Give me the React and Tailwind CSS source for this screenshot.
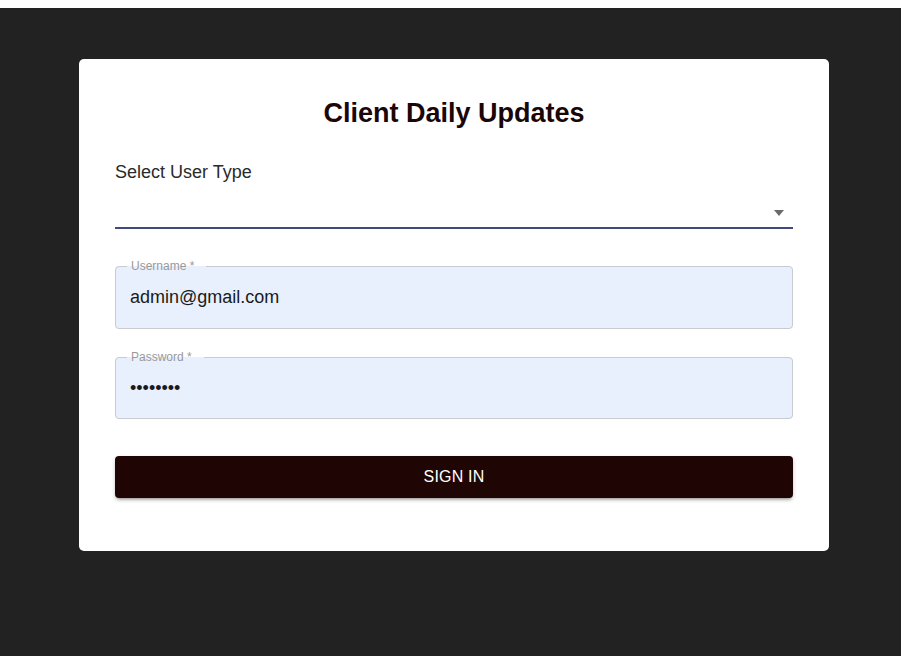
export default function App() {
  const font = { fontFamily: '"Liberation Sans", Arial, sans-serif' };
  return (
    <div className="bg-white py-2 w-full" style={font}>
      <div className="bg-[#222222] h-[648px] pt-[51px] pl-[79px]">
        <div className="bg-white w-[750px] h-[492px] rounded-[5px] px-[36px] pt-[39px]">
          <h1 className="text-center text-[27px] leading-[31px] font-bold text-[#1a0606]">
            Client Daily Updates
          </h1>
          <div className="mt-[32px] text-[18px] leading-[22px] text-[#2a2a2a]">Select User Type</div>
          <div className="h-[46px] border-b-2 border-[#424a7c] flex items-center justify-end pr-[8px] pt-[12px]">
            <svg width="12" height="6" viewBox="0 0 12 6" className="mt-[4px]">
              <path d="M1 0 L11 0 L6 6 Z" fill="#6b6b6b" />
            </svg>
          </div>
          <fieldset className="mt-[30px] border border-[#c8ccd2] rounded-[4px] bg-[#e8f0fe] pl-[11px]">
            <legend className="pl-[4px] pr-[12px] text-[12px] leading-[14px] text-[#999999]">Username *</legend>
            <div className="h-[55px] pt-[13px] pl-[3px] text-[18px] leading-[22px] text-[#1a1a1a]">admin@gmail.com</div>
          </fieldset>
          <fieldset className="mt-[21px] border border-[#c8ccd2] rounded-[4px] bg-[#e8f0fe] pl-[11px]">
            <legend className="pl-[4px] pr-[12px] text-[12px] leading-[14px] text-[#999999]">Password *</legend>
            <div className="h-[54px] pt-[13px] pl-[3px] text-[18px] leading-[22px] text-[#1a1a1a]">••••••••</div>
          </fieldset>
          <button className="mt-[37px] w-full h-[42px] rounded-[4px] bg-[#1f0605] text-white text-[16px] tracking-[0.2px] shadow-[0_3px_3px_-2px_rgba(0,0,0,0.3),0_2px_4px_0_rgba(0,0,0,0.2)]">
            SIGN IN
          </button>
        </div>
      </div>
    </div>
  );
}
